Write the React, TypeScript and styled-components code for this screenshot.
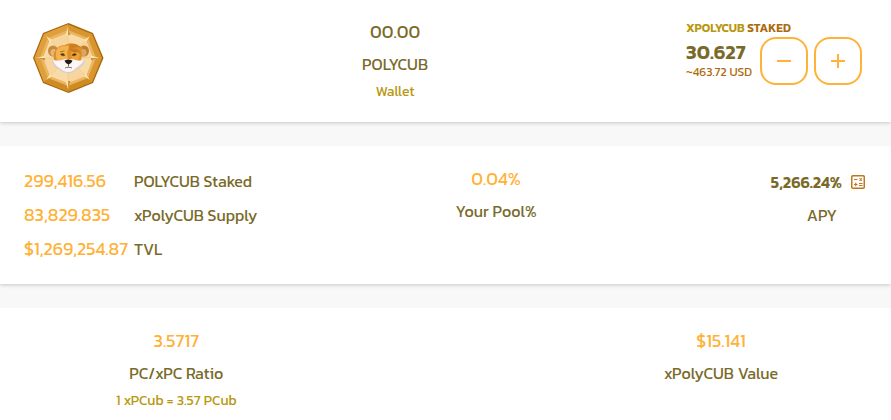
import React from "react";
import styled, { createGlobalStyle } from "styled-components";

const GlobalStyle = createGlobalStyle`
  * { box-sizing: border-box; }
  body {
    margin: 0;
    background: #f8f8f8;
    color: #7a6a2a;
    font-family: Kanit, Roboto, "Open Sans", sans-serif;
  }
`;

const Page = styled.main`
  display: flex;
  flex-direction: column;
  gap: 24px;
`;

const Card = styled.section`
  display: flex;
  justify-content: space-between;
  align-items: flex-start;
  background: #fff;
  box-shadow: 0 1px 4px rgba(0, 0, 0, 0.2);
  clip-path: inset(0 0 -8px 0);
`;

const WalletCard = styled(Card)`
  padding: 15px 29px 17px 32px;
`;

const PoolCard = styled(Card)`
  padding: 16px 26px 18px 24px;
`;

const RatioCard = styled(Card)`
  padding: 16px 113px 6px 116px;
`;

const Stack = styled.div`
  display: flex;
  flex-direction: column;
  align-items: center;
  white-space: nowrap;
`;

const Value = styled.div`
  font-size: 18px;
  line-height: 34px;
  color: #ffb237;
`;

const Balance = styled(Value)`
  color: inherit;
`;

const Label = styled.div`
  font-size: 16px;
  line-height: 30px;
`;

const Note = styled.div`
  font-size: 14px;
  line-height: 26px;
  color: #b8980f;
`;

const Medal = styled.svg`
  display: block;
  width: 72px;
  height: 72px;
  margin-top: 7px;
`;

const StakePanel = styled.div`
  display: grid;
  grid-template-columns: auto auto;
  column-gap: 8px;
  padding-top: 7px;
  white-space: nowrap;
`;

const StakeTitle = styled.h2`
  grid-column: 1 / -1;
  margin: 0;
  font-size: 12px;
  line-height: 12px;
  font-weight: 600;
  color: #ad6a0b;
`;

const Accent = styled.span`
  color: #b8980f;
`;

const Staked = styled.div`
  padding-top: 6px;
`;

const StakedAmount = styled.div`
  font-size: 20px;
  line-height: 25px;
  font-weight: 600;
`;

const StakedUsd = styled.div`
  font-size: 12px;
  line-height: 14px;
  color: #ad6a0b;
`;

const Actions = styled.div`
  display: flex;
  gap: 6px;
  padding-top: 3px;
`;

const RoundButton = styled.button`
  display: grid;
  place-items: center;
  width: 48px;
  height: 48px;
  padding: 0;
  border: 2px solid #ffb237;
  border-radius: 16px;
  background: #fff;
  color: #ffb237;
  cursor: pointer;
`;

const Totals = styled.dl`
  display: grid;
  grid-template-columns: 104px auto;
  column-gap: 6px;
  margin: 0;
  padding-top: 2px;
  white-space: nowrap;
`;

const TotalRow = styled.div`
  display: grid;
  grid-template-columns: subgrid;
  grid-column: 1 / -1;
  grid-auto-flow: dense;
  line-height: 34px;
`;

const TotalLabel = styled.dt`
  grid-column: 2;
  font-size: 16px;
`;

const TotalValue = styled.dd`
  grid-column: 1;
  margin: 0;
  font-size: 18px;
  color: #ffb237;
`;

const ApyStack = styled(Stack)`
  padding: 2px 0 0 36px;
`;

const ApyLine = styled.div`
  display: flex;
  align-items: center;
  gap: 9px;
  font-size: 16px;
  line-height: 36px;
  font-weight: 600;
`;

const ApyLabel = styled(Label)`
  padding-left: 8px;
`;

const CalcButton = styled.button`
  display: block;
  padding: 0;
  border: 0;
  background: none;
  color: #bd771c;
  cursor: pointer;
`;

const CalcSvg = styled.svg`
  display: block;
`;

function LionMedal() {
  return (
    <Medal viewBox="0 0 72 72" role="img" aria-label="PolyCUB">
      <path d="M36.500 1 61 11 71.500 36 61 61 36.500 71 11 61 1 36 11 11Z" fill="#a9680f" />
      <path d="M36 2.500 60 12 70 36 60 60 36 69.500 12 60 2.500 36 12 12Z" fill="#d9962f" />
      <path d="M36 2.500 12 12 2.500 36 12 60 18 54 10 36 18 18 36 10Z" fill="#dfa03c" />
      <path d="M12 60 36 69.500 60 60 54 54 36 62 18 54Z" fill="#cf8a22" />
      <path d="M36 8 56 16 64 36 56 56 36 64 16 56 8 36 16 16Z" fill="#eab561" />
      <path d="M36 11 54 18 61 36 54 54 36 61 18 54 11 36 18 18Z" fill="#f7d59c" />
      <path d="M36 36 36 11 54 18Z M36 36 61 36 54 54Z M36 36 36 61 18 54Z M36 36 11 36 18 18Z" fill="#f9dba7" />
      <path d="M36 11v50M11 36h50M18 18l36 36M54 18 18 54" stroke="#f0c888" strokeWidth=".6" />
      <path d="m36 5 2.500 8h-5Z M36 67l2.500-8h-5Z M5 36l8-2.500v5Z M67 36l-8-2.500v5Z M14 14l6 4-2 2Z M58 14l-4 6-2-2Z M14 58l4-6 2 2Z M58 58l-6-4 2-2Z" fill="#ffe4ac" />
      <path d="M36 5v8h2.500Z M36 67v-8h2.500Z M5 36h8v2.500Z M67 36h-8v2.500Z" fill="#cf9040" />
      <ellipse cx="21" cy="29" rx="5" ry="5.500" fill="#c98a3c" />
      <ellipse cx="52" cy="29" rx="5" ry="5.500" fill="#c07c2c" />
      <ellipse cx="21.500" cy="30.500" rx="3" ry="3.500" fill="#dfb67e" />
      <ellipse cx="51.500" cy="30.500" rx="3" ry="3.500" fill="#d8a868" />
      <path d="M22 31c2-5 6-8 11-8 5-3 10-2 14 1 4 1 5 3 2 4 2 4 1 9-2 14l-9 6-13-4c-3-4-4-8-3-13Z" fill="#df8f25" />
      <path d="M25 27c3-3 8-4 12-3l-2 7 1 7-9 4c-3-4-4-11-2-15Z" fill="#f3b44f" />
      <path d="M39 31c4-3 8-1 9 2l-2 5-6 1Z" fill="#eda23a" />
      <path d="M37 23c5-2 9-1 12 3-4-2-7-1-9 1 4-1 8 1 9 5-3-3-7-4-11-3Z" fill="#cc7e20" />
      <path d="M20 38c4 1 9 1 12-1l4 1 5-1c4 2 8 2 12 1-1 5-4 7-8 9-4 5-12 6-17 1-5-2-7-5-8-10Z" fill="#d8ccd0" />
      <path d="M21 38c4 1 9 1 12-1l3 1 4-1c4 2 8 2 12 1-2 4-5 6-8 8-4 5-11 5-15 1-4-2-7-5-8-9Z" fill="#fcf7f4" />
      <path d="M28.500 32.500c1.500-1.500 3.500-1 4.500.8-1.500.8-3 .6-4.500-.8Z M44.500 32.500c-1.500-1.500-3.500-1-4.500.8 1.500.8 3 .6 4.500-.8Z" fill="#3f3414" stroke="#6d4b14" strokeWidth=".5" />
      <path d="m28 30 4.500-1M40.500 29l4.500 1" stroke="#a75e12" strokeWidth=".8" />
      <path d="M32.500 38.500c2-1 6-1 8 0-.5 2-2 3-4 4-2-1-3.500-2-4-4Z" fill="#211b1b" />
      <path d="M36.500 42v2.500m-3.500 1.500c2-1 5-1 7 0" fill="none" stroke="#5c4542" strokeWidth=".8" />
    </Medal>
  );
}

function Calculator() {
  return (
    <CalcSvg width="14" height="14" viewBox="0 0 14 14" fill="none" stroke="currentColor" aria-hidden="true">
      <rect x=".75" y=".75" width="12.500" height="12.500" rx="1" strokeWidth="1.500" />
      <path d="M3 4.500h3.500M8.500 3.300l2.400 2.400M10.900 3.300 8.500 5.700M3 9.500h3.500M4.750 7.750v3.500M8 8.500h3.500M8 10.500h3.500" strokeWidth="1.200" />
    </CalcSvg>
  );
}

function Sign({ plus = false }: { plus?: boolean }) {
  return (
    <svg width="14" height="14" viewBox="0 0 14 14" stroke="currentColor" strokeWidth="2" aria-hidden="true">
      <path d={plus ? "M0 7h14M7 0v14" : "M0 7h14"} />
    </svg>
  );
}

const totals = [
  { value: "299,416.56", label: "POLYCUB Staked" },
  { value: "83,829.835", label: "xPolyCUB Supply" },
  { value: "$1,269,254.87", label: "TVL" },
];

export default function App() {
  return (
    <>
      <GlobalStyle />
      <Page>
        <WalletCard>
          <LionMedal />
          <Stack>
            <Balance>00.00</Balance>
            <Label>POLYCUB</Label>
            <Note>Wallet</Note>
          </Stack>
          <StakePanel>
            <StakeTitle><Accent>XPOLYCUB</Accent> STAKED</StakeTitle>
            <Staked>
              <StakedAmount>30.627</StakedAmount>
              <StakedUsd>~463.72 USD</StakedUsd>
            </Staked>
            <Actions>
              <RoundButton type="button" aria-label="Unstake"><Sign /></RoundButton>
              <RoundButton type="button" aria-label="Stake"><Sign plus /></RoundButton>
            </Actions>
          </StakePanel>
        </WalletCard>
        <PoolCard>
          <Totals>
            {totals.map((t) => (
              <TotalRow key={t.label}>
                <TotalLabel>{t.label}</TotalLabel>
                <TotalValue>{t.value}</TotalValue>
              </TotalRow>
            ))}
          </Totals>
          <Stack>
            <Value>0.04%</Value>
            <Label>Your Pool%</Label>
          </Stack>
          <ApyStack>
            <ApyLine>
              5,266.24%
              <CalcButton type="button" aria-label="APY calculator"><Calculator /></CalcButton>
            </ApyLine>
            <ApyLabel>APY</ApyLabel>
          </ApyStack>
        </PoolCard>
        <RatioCard>
          <Stack>
            <Value>3.5717</Value>
            <Label>PC/xPC Ratio</Label>
            <Note>1 xPCub = 3.57 PCub</Note>
          </Stack>
          <Stack>
            <Value>$15.141</Value>
            <Label>xPolyCUB Value</Label>
          </Stack>
        </RatioCard>
      </Page>
    </>
  );
}
